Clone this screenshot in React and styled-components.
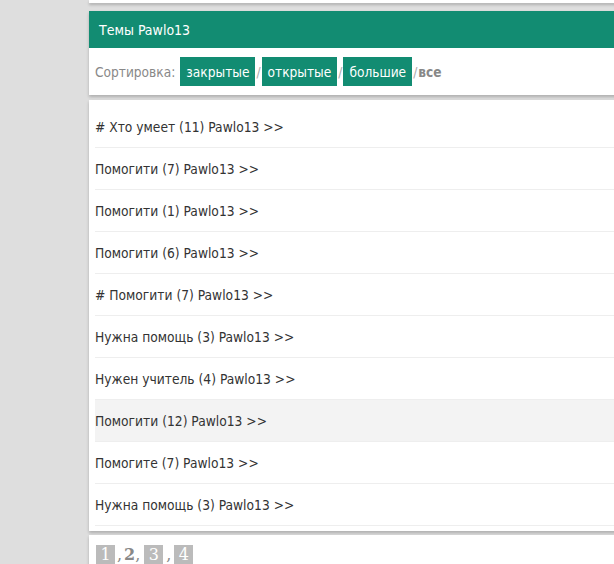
import React from 'react';
import styled, { createGlobalStyle } from 'styled-components';

const Global = createGlobalStyle`
  html, body {
    margin: 0;
    padding: 0;
    background: #dedede;
    overflow: hidden;
  }
  body {
    font-family: "DejaVu Sans Condensed", "Liberation Sans", sans-serif;
    font-size: 13px;
  }
`;

const Page = styled.div`
  display: flex;
  width: 614px;
  height: 564px;
`;

const Side = styled.div`
  width: 89px;
  flex-shrink: 0;
  background: #dedede;
`;

const Main = styled.div`
  flex: 1;
  display: flex;
  flex-direction: column;
  min-width: 0;
`;

const Card = styled.div`
  background: #fff;
  box-shadow: 0 2px 3px rgba(0, 0, 0, 0.22);
  margin-top: ${p => p.$top || 0}px;
  width: 560px;
  flex-shrink: 0;
`;

const TopStub = styled(Card)`
  height: 3px;
`;

const Header = styled.div`
  background: #128c72;
  color: #fff;
  height: 37px;
  display: flex;
  align-items: center;
  padding-left: 10px;
  font-size: 14px;
`;

const SortRow = styled.div`
  height: 47px;
  display: flex;
  align-items: center;
  padding-left: 6px;
  color: #888;
  font-size: 13.6px;
`;

const SortLabel = styled.span`
  margin-right: 5px;
`;

const SortBtn = styled.a`
  background: #128c72;
  color: #fff;
  height: 29px;
  padding: 0 6px;
  display: flex;
  align-items: center;
  text-decoration: none;
`;

const Sep = styled.span`
  color: #aaa;
  padding: 0 1px;
`;

const All = styled.b`
  color: #888;
`;

const List = styled.div`
  padding: 6px 0 5px 6px;
`;

const Row = styled.div`
  height: 41px;
  border-bottom: 1px solid #eee;
  display: flex;
  align-items: center;
  color: #333;
  font-size: 13.7px;
  background: ${p => (p.$active ? '#f3f3f3' : 'transparent')};
`;

const Pager = styled(Card)`
  padding: 10px 7px 0;
  height: 30px;
  display: flex;
  align-items: flex-start;
  color: #888;
  font-size: 16px;
  line-height: 20px;
  font-family: "DejaVu Serif", "Liberation Serif", serif;
`;

const PageBox = styled.span`
  background: #bbb;
  color: #fff;
  width: 19px;
  height: 20px;
  text-align: center;
`;

const Comma = styled.span`
  margin: 0 ${p => p.$r}px 0 ${p => p.$l}px;
`;

const topics = [
  '# Хто умеет (11) Pawlo13 >>',
  'Помогити (7) Pawlo13 >>',
  'Помогити (1) Pawlo13 >>',
  'Помогити (6) Pawlo13 >>',
  '# Помогити (7) Pawlo13 >>',
  'Нужна помощь (3) Pawlo13 >>',
  'Нужен учитель (4) Pawlo13 >>',
  'Помогити (12) Pawlo13 >>',
  'Помогите (7) Pawlo13 >>',
  'Нужна помощь (3) Pawlo13 >>',
];

export default function App() {
  return (
    <Page>
      <Global />
      <Side />
      <Main>
        <TopStub />
        <Card $top={8}>
          <Header>Темы Pawlo13</Header>
          <SortRow>
            <SortLabel>Сортировка:</SortLabel>
            <SortBtn>закрытые</SortBtn>
            <Sep>/</Sep>
            <SortBtn>открытые</SortBtn>
            <Sep>/</Sep>
            <SortBtn>большие</SortBtn>
            <Sep>/</Sep>
            <All>все</All>
          </SortRow>
        </Card>
        <Card $top={5}>
          <List>
            {topics.map((t, i) => (
              <Row key={i} $active={i === 7}>{t}</Row>
            ))}
          </List>
        </Card>
        <Pager $top={4}>
          <PageBox>1</PageBox>
          <Comma $l={2} $r={2}>,</Comma>
          <b>2</b>
          <Comma $l={0} $r={4}>,</Comma>
          <PageBox>3</PageBox>
          <Comma $l={3} $r={3}>,</Comma>
          <PageBox>4</PageBox>
        </Pager>
      </Main>
    </Page>
  );
}
